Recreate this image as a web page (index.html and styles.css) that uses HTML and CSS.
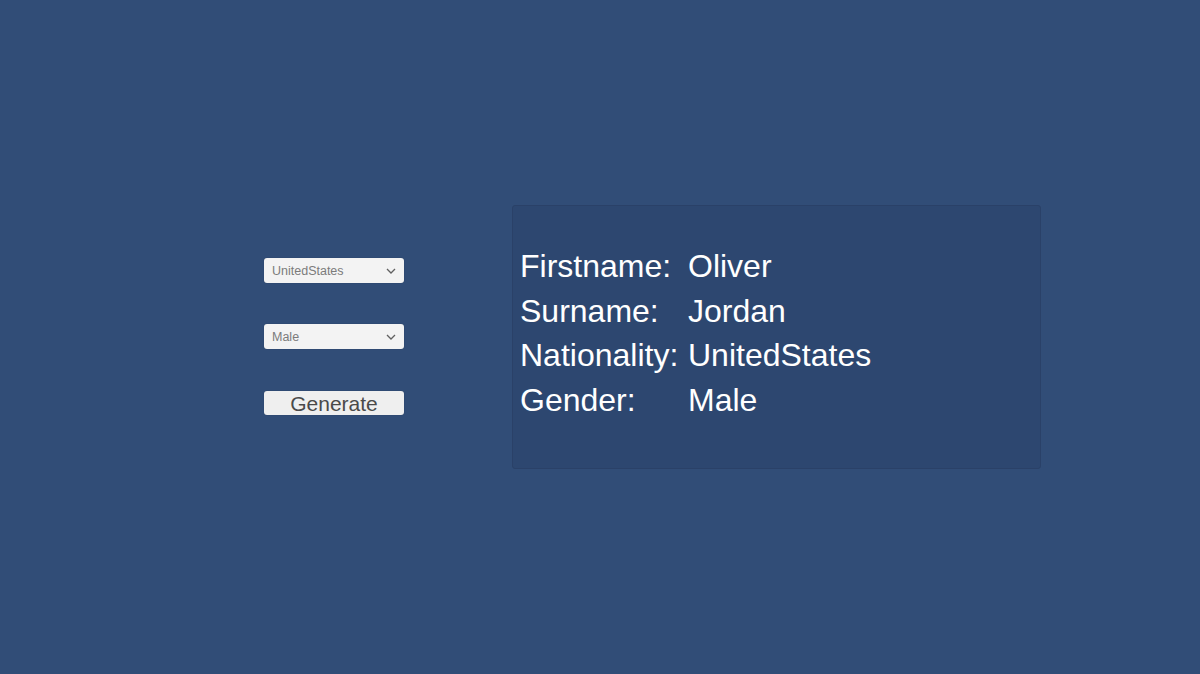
FILE: index.html
```html
<!DOCTYPE html>
<html>
<head>
<meta charset="utf-8">
<link rel="stylesheet" href="styles.css">
</head>
<body>
<div class="page">
  <div class="controls">
    <div class="dropdown"><span>UnitedStates</span>
      <svg class="chev" width="10" height="6" viewBox="0 0 10 6"><path d="M1 1 L5 5 L9 1" fill="none" stroke="#606060" stroke-width="1.3"/></svg>
    </div>
    <div class="dropdown"><span>Male</span>
      <svg class="chev" width="10" height="6" viewBox="0 0 10 6"><path d="M1 1 L5 5 L9 1" fill="none" stroke="#606060" stroke-width="1.3"/></svg>
    </div>
    <div class="button">Generate</div>
  </div>
  <div class="panel">
    <div class="info">
      <div>Firstname:</div><div>Oliver</div>
      <div>Surname:</div><div>Jordan</div>
      <div>Nationality:</div><div>UnitedStates</div>
      <div>Gender:</div><div>Male</div>
    </div>
  </div>
</div>
</body>
</html>
```
FILE: styles.css
```css
html, body {
  margin: 0;
  padding: 0;
  background: #314d77;
  font-family: "Liberation Sans", Arial, sans-serif;
  height: 100%;
  overflow: hidden;
}
.page {
  display: flex;
  align-items: flex-start;
  padding: 205px 0 0 264px;
  gap: 108px;
}
.controls {
  width: 140px;
  margin-top: 53px;
  display: flex;
  flex-direction: column;
}
.dropdown {
  height: 25px;
  box-sizing: border-box;
  background: #f3f3f3;
  border-radius: 3px;
  box-shadow: 0 0 1px rgba(0,0,0,0.3);
  display: flex;
  align-items: center;
  justify-content: space-between;
  padding: 1px 8px 0 8px;
  font-size: 12.5px;
  color: #7b7b7b;
  margin-bottom: 41px;
}
.chev {
  display: block;
}
.button {
  margin-top: 1px;
  height: 24px;
  box-sizing: border-box;
  background: #efefef;
  border-radius: 3px;
  box-shadow: 0 0 1px rgba(0,0,0,0.3);
  display: flex;
  align-items: center;
  justify-content: center;
  padding-top: 2px;
  font-size: 21px;
  color: #4a4a4a;
  line-height: 24px;
}
.panel {
  width: 529px;
  height: 264px;
  box-sizing: border-box;
  background: #2d4770;
  border: 1px solid #2a4168;
  border-radius: 3px;
  padding: 38px 0 0 7px;
}
.info {
  display: grid;
  grid-template-columns: 168px auto;
  font-size: 32px;
  line-height: 44.5px;
  color: #ffffff;
}
```
